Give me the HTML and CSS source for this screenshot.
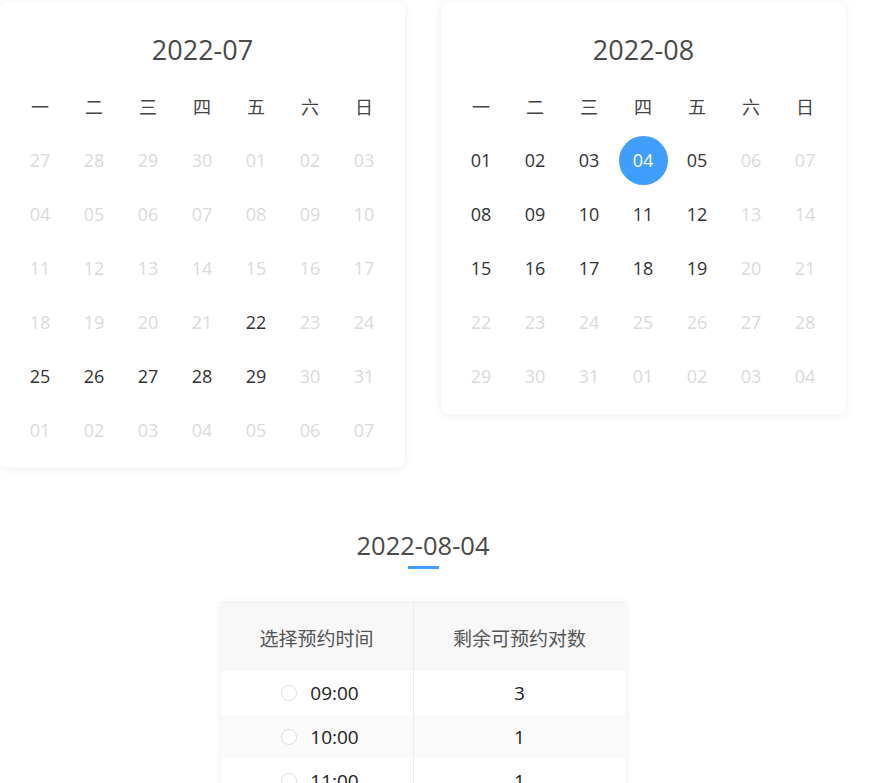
FILE: index.html
```html
<!DOCTYPE html>
<html lang="zh">
<head>
<meta charset="utf-8">
<title>预约</title>
<link rel="stylesheet" href="styles.css">
</head>
<body>
<div class="page">
  <div class="calendars">
    <div class="card">
      <div class="month">2022-07</div>
      <div class="grid">
        <span class="wd">一</span><span class="wd">二</span><span class="wd">三</span><span class="wd">四</span><span class="wd">五</span><span class="wd">六</span><span class="wd">日</span>
        <span class="d off">27</span><span class="d off">28</span><span class="d off">29</span><span class="d off">30</span><span class="d off">01</span><span class="d off">02</span><span class="d off">03</span>
        <span class="d off">04</span><span class="d off">05</span><span class="d off">06</span><span class="d off">07</span><span class="d off">08</span><span class="d off">09</span><span class="d off">10</span>
        <span class="d off">11</span><span class="d off">12</span><span class="d off">13</span><span class="d off">14</span><span class="d off">15</span><span class="d off">16</span><span class="d off">17</span>
        <span class="d off">18</span><span class="d off">19</span><span class="d off">20</span><span class="d off">21</span><span class="d">22</span><span class="d off">23</span><span class="d off">24</span>
        <span class="d">25</span><span class="d">26</span><span class="d">27</span><span class="d">28</span><span class="d">29</span><span class="d off">30</span><span class="d off">31</span>
        <span class="d off">01</span><span class="d off">02</span><span class="d off">03</span><span class="d off">04</span><span class="d off">05</span><span class="d off">06</span><span class="d off">07</span>
      </div>
    </div>
    <div class="card">
      <div class="month">2022-08</div>
      <div class="grid">
        <span class="wd">一</span><span class="wd">二</span><span class="wd">三</span><span class="wd">四</span><span class="wd">五</span><span class="wd">六</span><span class="wd">日</span>
        <span class="d">01</span><span class="d">02</span><span class="d">03</span><span class="d"><b class="sel">04</b></span><span class="d">05</span><span class="d off">06</span><span class="d off">07</span>
        <span class="d">08</span><span class="d">09</span><span class="d">10</span><span class="d">11</span><span class="d">12</span><span class="d off">13</span><span class="d off">14</span>
        <span class="d">15</span><span class="d">16</span><span class="d">17</span><span class="d">18</span><span class="d">19</span><span class="d off">20</span><span class="d off">21</span>
        <span class="d off">22</span><span class="d off">23</span><span class="d off">24</span><span class="d off">25</span><span class="d off">26</span><span class="d off">27</span><span class="d off">28</span>
        <span class="d off">29</span><span class="d off">30</span><span class="d off">31</span><span class="d off">01</span><span class="d off">02</span><span class="d off">03</span><span class="d off">04</span>
      </div>
    </div>
  </div>

  <div class="day">
    <div class="day-title">2022-08-04</div>
    <div class="bar"></div>
  </div>

  <table class="slots">
    <thead>
      <tr><th class="c1">选择预约时间</th><th class="c2">剩余可预约对数</th></tr>
    </thead>
    <tbody>
      <tr><td class="c1"><label class="opt"><span class="radio"></span>09:00</label></td><td class="c2">3</td></tr>
      <tr class="alt"><td class="c1"><label class="opt"><span class="radio"></span>10:00</label></td><td class="c2">1</td></tr>
      <tr><td class="c1"><label class="opt"><span class="radio"></span>11:00</label></td><td class="c2">1</td></tr>
    </tbody>
  </table>
</div>
</body>
</html>
```

FILE: styles.css
```css
html, body {
  margin: 0;
  padding: 0;
  background: #fff;
}
body {
  font-family: "Open Sans", "Noto Sans CJK SC", sans-serif;
  color: #444;
  overflow: hidden;
}
.page {
  width: 846px;
  padding-top: 2px;
}
.calendars {
  display: flex;
  justify-content: space-between;
  align-items: flex-start;
}
.card {
  width: 405px;
  box-sizing: border-box;
  padding: 0 13px 11px;
  background: #fff;
  border-radius: 8px;
  box-shadow: 0 1px 8px rgba(0, 0, 0, 0.08);
}
.month {
  padding-top: 30px;
  height: 36px;
  line-height: 36px;
  margin-bottom: 11px;
  text-align: center;
  font-size: 27px;
  color: #4a4a4a;
}
.grid {
  display: grid;
  grid-template-columns: repeat(7, 54px);
  grid-auto-rows: 54px;
}
.grid span {
  display: flex;
  align-items: center;
  justify-content: center;
  font-size: 18px;
}
.wd {
  font-family: "Noto Sans CJK SC", sans-serif;
  color: #444;
}
.d { color: #333; }
.d.off { color: #dadada; }
.sel {
  display: flex;
  align-items: center;
  justify-content: center;
  width: 49px;
  height: 49px;
  border-radius: 50%;
  background: #409eff;
  color: #fff;
  font-weight: normal;
}
.day {
  margin-top: 59px;
  display: flex;
  flex-direction: column;
  align-items: center;
}
.day-title {
  font-size: 25.5px;
  line-height: 36px;
  color: #4a4a4a;
}
.bar {
  margin-top: 3px;
  width: 31px;
  height: 3px;
  background: #409eff;
}
.slots {
  margin: 33px auto 0;
  width: 405px;
  border-collapse: collapse;
  box-shadow: 0 1px 8px rgba(0, 0, 0, 0.08);
  border-top: 1px solid #eeeeee;
  font-size: 19px;
}
.slots th, .slots td {
  text-align: center;
  padding: 0;
}
.slots th {
  height: 68px;
  background: #f8f8f8;
  font-weight: normal;
  font-family: "Noto Sans CJK SC", sans-serif;
  color: #555;
}
.slots td { height: 44px; color: #222; }
.slots .c1 { width: 192px; border-right: 1px solid #ececec; }
.slots tr.alt td { background: #fafafa; }
.opt {
  display: inline-flex;
  align-items: center;
  gap: 13px;
  margin-left: 7px;
}
.radio {
  width: 14px;
  height: 14px;
  border: 1px solid #dcdfe6;
  border-radius: 50%;
  background: #fff;
}
```
